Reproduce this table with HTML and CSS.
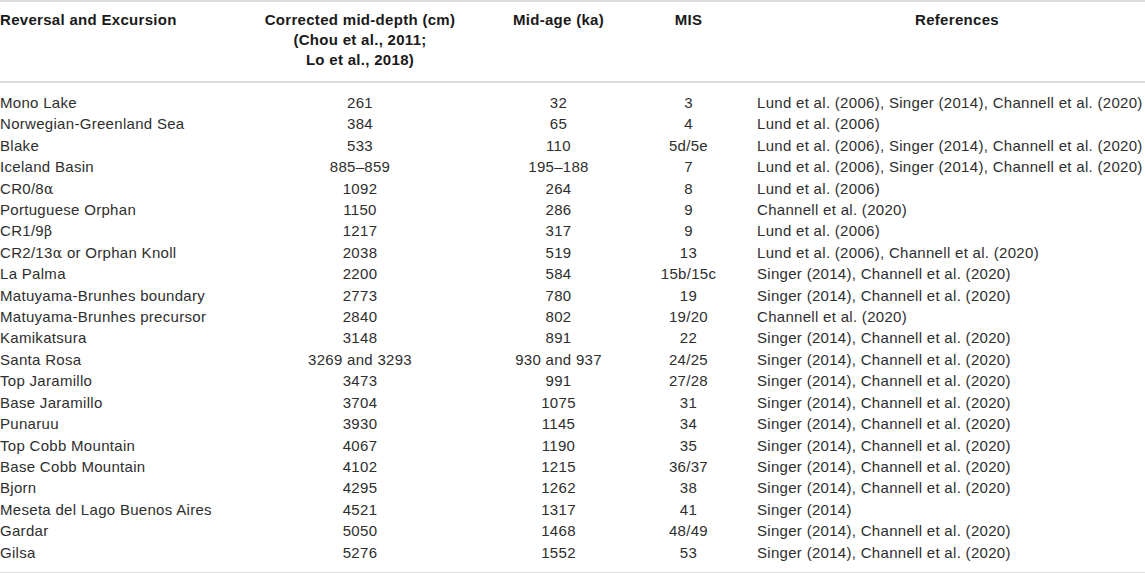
FILE: index.html
```html
<!DOCTYPE html>
<html lang="en">
<head>
<meta charset="utf-8">
<title>Reversals and Excursions</title>
<link rel="stylesheet" href="styles.css">
</head>
<body>
<table class="data">
  <colgroup>
    <col class="c1"><col class="c2"><col class="c3"><col class="c4"><col class="c5">
  </colgroup>
  <thead>
    <tr>
      <th class="left">Reversal and Excursion</th>
      <th>Corrected mid-depth (cm)<br>(Chou et al., 2011;<br>Lo et al., 2018)</th>
      <th>Mid-age (ka)</th>
      <th>MIS</th>
      <th class="refs">References</th>
    </tr>
  </thead>
  <tbody>
    <tr><td class="left">Mono Lake</td><td>261</td><td>32</td><td>3</td><td class="ref">Lund et al. (2006), Singer (2014), Channell et al. (2020)</td></tr>
    <tr><td class="left">Norwegian-Greenland Sea</td><td>384</td><td>65</td><td>4</td><td class="ref">Lund et al. (2006)</td></tr>
    <tr><td class="left">Blake</td><td>533</td><td>110</td><td>5d/5e</td><td class="ref">Lund et al. (2006), Singer (2014), Channell et al. (2020)</td></tr>
    <tr><td class="left">Iceland Basin</td><td>885–859</td><td>195–188</td><td>7</td><td class="ref">Lund et al. (2006), Singer (2014), Channell et al. (2020)</td></tr>
    <tr><td class="left">CR0/8<span class="greek">α</span></td><td>1092</td><td>264</td><td>8</td><td class="ref">Lund et al. (2006)</td></tr>
    <tr><td class="left">Portuguese Orphan</td><td>1150</td><td>286</td><td>9</td><td class="ref">Channell et al. (2020)</td></tr>
    <tr><td class="left">CR1/9<span class="greek">β</span></td><td>1217</td><td>317</td><td>9</td><td class="ref">Lund et al. (2006)</td></tr>
    <tr><td class="left">CR2/13<span class="greek">α</span> or Orphan Knoll</td><td>2038</td><td>519</td><td>13</td><td class="ref">Lund et al. (2006), Channell et al. (2020)</td></tr>
    <tr><td class="left">La Palma</td><td>2200</td><td>584</td><td>15b/15c</td><td class="ref">Singer (2014), Channell et al. (2020)</td></tr>
    <tr><td class="left">Matuyama-Brunhes boundary</td><td>2773</td><td>780</td><td>19</td><td class="ref">Singer (2014), Channell et al. (2020)</td></tr>
    <tr><td class="left">Matuyama-Brunhes precursor</td><td>2840</td><td>802</td><td>19/20</td><td class="ref">Channell et al. (2020)</td></tr>
    <tr><td class="left">Kamikatsura</td><td>3148</td><td>891</td><td>22</td><td class="ref">Singer (2014), Channell et al. (2020)</td></tr>
    <tr><td class="left">Santa Rosa</td><td>3269 and 3293</td><td>930 and 937</td><td>24/25</td><td class="ref">Singer (2014), Channell et al. (2020)</td></tr>
    <tr><td class="left">Top Jaramillo</td><td>3473</td><td>991</td><td>27/28</td><td class="ref">Singer (2014), Channell et al. (2020)</td></tr>
    <tr><td class="left">Base Jaramillo</td><td>3704</td><td>1075</td><td>31</td><td class="ref">Singer (2014), Channell et al. (2020)</td></tr>
    <tr><td class="left">Punaruu</td><td>3930</td><td>1145</td><td>34</td><td class="ref">Singer (2014), Channell et al. (2020)</td></tr>
    <tr><td class="left">Top Cobb Mountain</td><td>4067</td><td>1190</td><td>35</td><td class="ref">Singer (2014), Channell et al. (2020)</td></tr>
    <tr><td class="left">Base Cobb Mountain</td><td>4102</td><td>1215</td><td>36/37</td><td class="ref">Singer (2014), Channell et al. (2020)</td></tr>
    <tr><td class="left">Bjorn</td><td>4295</td><td>1262</td><td>38</td><td class="ref">Singer (2014), Channell et al. (2020)</td></tr>
    <tr><td class="left">Meseta del Lago Buenos Aires</td><td>4521</td><td>1317</td><td>41</td><td class="ref">Singer (2014)</td></tr>
    <tr><td class="left">Gardar</td><td>5050</td><td>1468</td><td>48/49</td><td class="ref">Singer (2014), Channell et al. (2020)</td></tr>
    <tr><td class="left">Gilsa</td><td>5276</td><td>1552</td><td>53</td><td class="ref">Singer (2014), Channell et al. (2020)</td></tr>
  </tbody>
</table>
</body>
</html>
```

FILE: styles.css
```css
html, body {
  margin: 0;
  padding: 0;
  background: #ffffff;
}

body {
  font-family: "Liberation Sans", Arial, sans-serif;
  font-size: 15px;
  letter-spacing: 0.3px;
  color: #2e2e2e;
}

.data {
  width: 1145px;
  table-layout: fixed;
  border-collapse: collapse;
  border-top: 2px solid #dcdcdc;
  border-bottom: 2px solid #dcdcdc;
}

.c1 { width: 223px; }
.c2 { width: 274px; }
.c3 { width: 123px; }
.c4 { width: 137px; }
.c5 { width: 388px; }

.data th {
  font-weight: bold;
  color: #1a1a1a;
  line-height: 20px;
  text-align: center;
  vertical-align: top;
  padding: 8px 0 11px 0;
  border-bottom: 2px solid #dcdcdc;
}

.data td {
  height: 21.4px;
  line-height: 21.4px;
  padding: 0;
  text-align: center;
  white-space: nowrap;
}

.data tbody tr:first-child td {
  padding-top: 9px;
}

.data tbody tr:last-child td {
  padding-bottom: 9px;
}

.data .left {
  text-align: left;
}

.data .refs {
  padding-left: 12px;
}

.data .ref {
  text-align: left;
}

.greek {
  font-family: "DejaVu Serif", "Liberation Serif", serif;
  font-size: 14px;
  line-height: 0;
}
```
